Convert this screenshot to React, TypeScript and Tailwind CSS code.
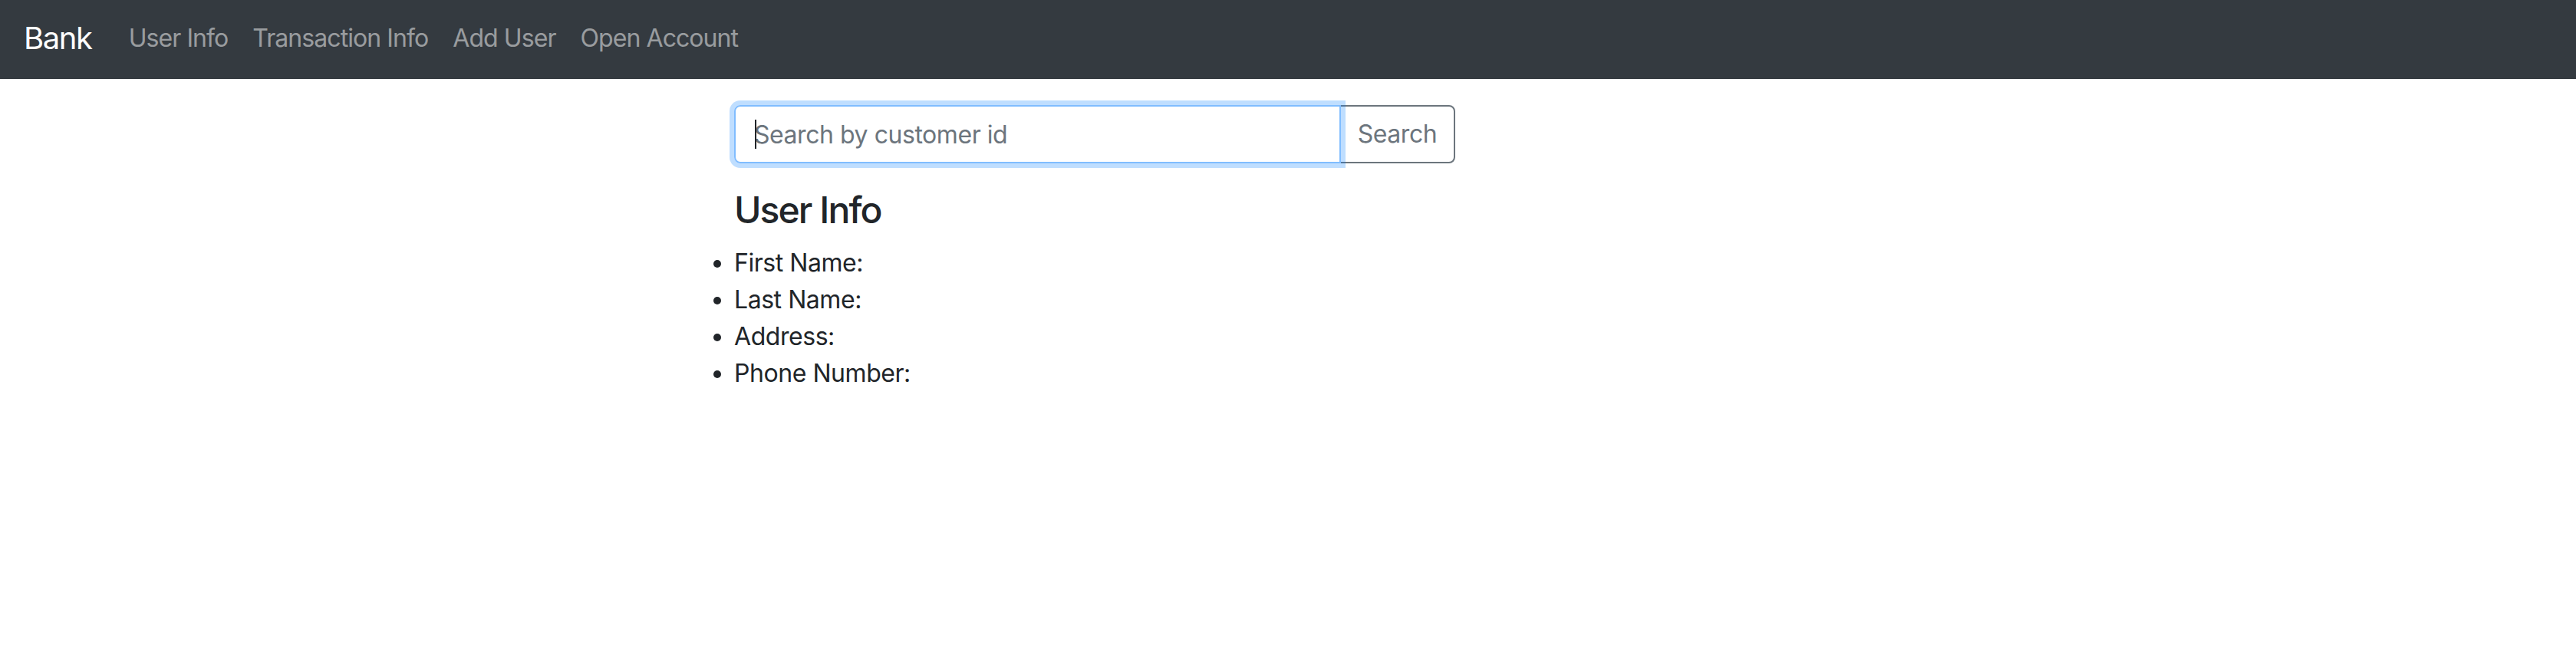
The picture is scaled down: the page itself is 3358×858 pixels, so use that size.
const links = ['User Info', 'Transaction Info', 'Add User', 'Open Account'];
const fields = ['First Name:', 'Last Name:', 'Address:', 'Phone Number:'];

export default function App() {
  return (
    <div className="min-h-screen bg-white text-[#212529] font-['Inter',sans-serif] tracking-[-0.028em]">
      {/* Navbar */}
      <nav className="h-[103px] bg-[#343a40] flex items-center px-[31px] pb-[4px]">
        <a href="#" className="text-[40px] leading-[60px] text-white mr-[32px] tracking-[-0.035em]">
          Bank
        </a>
        <ul className="flex items-center">
          {links.map((l) => (
            <li key={l}>
              <a href="#" className="block px-[16px] text-[32px] leading-[48px] text-white/50 tracking-[-0.029em]">
                {l}
              </a>
            </li>
          ))}
        </ul>
      </nav>

      <div className="ml-[957px] w-[940px] mt-[34px]">
        {/* Search */}
        <div className="flex">
          <div className="relative z-10 flex-1 flex">
            <input
              placeholder="Search by customer id"
              className="flex-1 h-[76px] px-[24px] text-[32px] leading-[48px] border-2 border-[#80bdff] rounded-l-[8px] outline-none shadow-[0_0_0_6px_rgba(0,123,255,0.25)] placeholder:text-[#6c757d] caret-transparent"
            />
            <span className="absolute left-[27px] top-[19px] w-[2px] h-[38px] bg-[#212529]" />
          </div>
          <button className="-ml-[2px] h-[76px] w-[151px] text-[32px] leading-[48px] text-[#6c757d] border-2 border-[#6c757d] rounded-r-[8px] bg-white">
            Search
          </button>
        </div>

        {/* User info */}
        <h4 className="mt-[32px] mb-[16px] text-[48px] leading-[57.6px] font-medium tracking-[-0.04em]">User Info</h4>
        <ul className="list-disc text-[32px] leading-[48px]">
          {fields.map((f) => (
            <li key={f}>{f}</li>
          ))}
        </ul>
      </div>
    </div>
  );
}
